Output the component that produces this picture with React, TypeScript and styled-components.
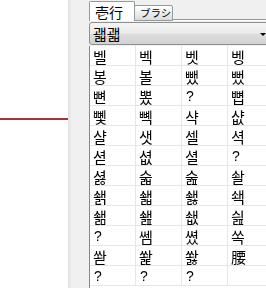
import React from "react";
import styled, { createGlobalStyle } from "styled-components";

const Global = createGlobalStyle`
  html, body { margin: 0; padding: 0; background: #ffffff; }
  body { width: 266px; height: 288px; overflow: hidden; }
  #root { width: 266px; height: 288px; }
`;

const Screen = styled.div`
  display: flex;
  width: 266px;
  height: 288px;
  overflow: hidden;
`;

const Canvas = styled.div`
  width: 68px;
  flex: none;
  background: #ffffff;
  padding-top: 118px;
  box-sizing: border-box;
`;

const GuideLine = styled.div`
  height: 2px;
  background: #a5343a;
`;

const Panel = styled.div`
  flex: none;
  width: 260px;
  background: #f0f0f0;
  border-left: 1px solid #e2e2e2;
  box-shadow: inset 2px 0 0 #e8e8e8;
  padding-left: 20px;
  display: flex;
  flex-direction: column;
  box-sizing: border-box;
`;

const TabBar = styled.div`
  display: flex;
  align-items: flex-end;
  height: 21px;
`;

const Tab = styled.div<{ $active?: boolean }>`
  box-sizing: border-box;
  display: flex;
  align-items: center;
  white-space: nowrap;
  line-height: 1;
  font-family: "Noto Sans CJK JP", "Noto Sans CJK KR", sans-serif;
  color: #000;
  border: 1px solid #919b9c;
  border-bottom: ${(p) => (p.$active ? "none" : "1px solid #919b9c")};
  border-radius: 2px 2px 0 0;
  ${(p) =>
    p.$active
      ? `
    width: 46px;
    height: 20px;
    background: #ffffff;
    font-size: 14px;
    padding-left: 5px;
    padding-top: 1px;
  `
      : `
    width: 39px;
    height: 16px;
    margin-left: -1px;
    background: linear-gradient(#ffffff, #dcdcdc);
    font-size: 10.5px;
    padding-left: 5px;
    padding-top: 1px;
  `}
`;

const TabFiller = styled.div`
  flex: 1;
  height: 2px;
  border-top: 1px solid #919b9c;
  background: #ffffff;
  box-sizing: border-box;
`;

const Combo = styled.div`
  box-sizing: border-box;
  margin-top: 1px;
  width: 190px;
  height: 23px;
  border: 1px solid #8e8f8f;
  border-radius: 3px;
  background: linear-gradient(#f4f4f4 0%, #ececec 45%, #dddddd 55%, #d2d2d2 100%);
  display: flex;
  align-items: center;
  padding-left: 3px;
  font-family: "Noto Sans CJK KR", sans-serif;
  font-size: 15px;
  color: #000;
  position: relative;
`;

const Arrow = styled.div`
  position: absolute;
  right: 12px;
  top: 10px;
  width: 0;
  height: 0;
  border-left: 3px solid transparent;
  border-right: 3px solid transparent;
  border-top: 3px solid #000;
`;

const Grid = styled.div`
  margin-top: 1px;
  display: grid;
  grid-template-columns: repeat(4, 46px);
  grid-auto-rows: 20px;
  background: #ffffff;
  border-left: 1px solid #828790;
  flex: 1;
  width: 190px;
  filter: grayscale(1);
`;

const Cell = styled.div<{ $latin?: boolean }>`
  box-sizing: border-box;
  border-right: 1px solid #e6e6e6;
  border-bottom: 1px solid #e6e6e6;
  padding-left: ${(p) => (p.$latin ? "4px" : "3px")};
  padding-top: 1px;
  display: flex;
  align-items: center;
  font-family: ${(p) =>
    p.$latin ? '"Liberation Sans", sans-serif' : '"Noto Sans CJK KR", sans-serif'};
  font-size: ${(p) => (p.$latin ? "14px" : "15px")};
  color: #000;
  line-height: 1;
`;

const rows: string[][] = [
  ["벨", "벡", "벳", "벵"],
  ["봉", "볼", "뺐", "뻤"],
  ["뼌", "뽔", "?", "뼙"],
  ["뼻", "뼥", "샥", "샶"],
  ["샬", "샛", "셀", "셕"],
  ["셛", "셦", "셜", "?"],
  ["셣", "숣", "숦", "솰"],
  ["쇍", "쇏", "쇓", "쇅"],
  ["쇎", "쇒", "쇖", "싎"],
  ["?", "쎔", "쎴", "쏙"],
  ["쏻", "쐁", "쐃", "腰"],
  ["?", "?", "?", ""],
];

export default function App() {
  return (
    <>
      <Global />
      <Screen>
        <Canvas>
          <GuideLine />
        </Canvas>
        <Panel>
          <TabBar>
            <Tab $active>壱行</Tab>
            <Tab>ブラシ</Tab>
            <TabFiller />
          </TabBar>
          <Combo>
            괣괣
            <Arrow />
          </Combo>
          <Grid>
            {rows.flatMap((r, i) =>
              r.map((c, j) => (
                <Cell key={`${i}-${j}`} $latin={c === "?"}>
                  {c}
                </Cell>
              ))
            )}
          </Grid>
        </Panel>
      </Screen>
    </>
  );
}
